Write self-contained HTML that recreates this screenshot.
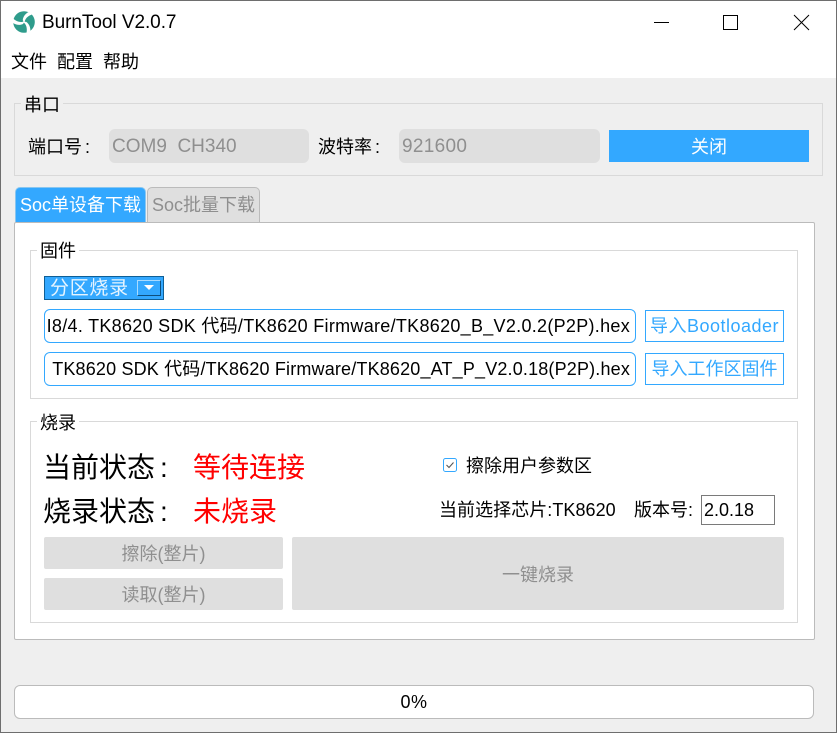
<!DOCTYPE html>
<html lang="zh"><head><meta charset="utf-8"><style>
*{box-sizing:border-box;margin:0;padding:0}
html,body{width:837px;height:733px;overflow:hidden;background:#efefef}
body{position:relative;font-family:"Liberation Sans","Noto Sans CJK SC",sans-serif;color:#000}
.a{position:absolute;white-space:nowrap}
.t{font-size:18px;line-height:24px}
.c{margin-left:3px}
.grp{position:absolute;border:1px solid #d9d9d9}
.lg{position:absolute;font-size:18px;line-height:20px;padding:0 3px}
.dis{position:absolute;background:#dfdfdf;color:#8f8f8f;font-size:18px;text-align:center;border-radius:2px}
.path{position:absolute;left:44px;width:592px;height:34px;background:#fff;border:1px solid #33a8ff;border-radius:6px;font-size:18px;line-height:32px;overflow:hidden;white-space:nowrap}
.imp{position:absolute;left:645px;width:139px;height:32px;border:1px solid #33a8ff;background:#fff;color:#33a8ff;font-size:18px;line-height:30px;text-align:center;white-space:nowrap}
</style></head><body>
<div class="a" style="left:0;top:0;width:837px;height:78px;background:#fff"></div>

<svg class="a" style="left:12px;top:10px" width="24" height="24" viewBox="0 0 24 24">
<circle cx="12" cy="12" r="10.8" fill="#2f9c8c"/>
<g fill="#fff">
<path id="b" d="M13 11 C9 13 5 12 1 8.5 L1 13 C4 15 8 15.5 11 14 Z"/>
<path d="M13 11 C9 13 5 12 1 8.5 L1 13 C4 15 8 15.5 11 14 Z" transform="rotate(120 12 12)"/>
<path d="M13 11 C9 13 5 12 1 8.5 L1 13 C4 15 8 15.5 11 14 Z" transform="rotate(240 12 12)"/>
</g>
</svg>
<div class="a" style="left:42px;top:10px;font-size:19px;line-height:26px;letter-spacing:-.05px">BurnTool V2.0.7</div>

<svg class="a" style="left:650px;top:10px" width="170" height="26" viewBox="0 0 170 26" fill="none" stroke="#000">
<path d="M4 12.5 H19" stroke-width="1"/>
<rect x="73.5" y="5.5" width="14" height="14" stroke-width="1"/>
<path d="M144 5 L159 20 M159 5 L144 20" stroke-width="1"/>
</svg>

<div class="a t" style="left:11px;top:50px">文件</div>
<div class="a t" style="left:57px;top:50px">配置</div>
<div class="a t" style="left:103px;top:50px">帮助</div>

<div class="grp" style="left:14px;top:103px;width:809px;height:73px"></div>
<div class="lg" style="left:21px;top:95px;background:#efefef">串口</div>
<div class="a t" style="left:28px;top:135px">端口号<span class="c">:</span></div>
<div class="a" style="left:109px;top:129px;width:200px;height:34px;background:#dfdfdf;border-radius:6px;color:#8f8f8f;font-size:19px;line-height:36px;padding-left:3px;white-space:pre">COM9  CH340</div>
<div class="a t" style="left:318px;top:135px">波特率<span class="c">:</span></div>
<div class="a" style="left:399px;top:129px;width:201px;height:34px;background:#dfdfdf;border-radius:6px;color:#8f8f8f;font-size:19px;line-height:36px;padding-left:3px;letter-spacing:.3px">921600</div>
<div class="a" style="left:609px;top:130px;width:200px;height:32px;background:#33a8ff;color:#fff;font-size:18px;line-height:34px;text-align:center">关闭</div>

<div class="a" style="left:15px;top:187px;width:131px;height:35px;background:#33a8ff;border:1px solid #88c6f0;border-bottom:0;border-radius:5px 5px 0 0;color:#fff;font-size:18px;line-height:34px;text-align:center">Soc单设备下载</div>
<div class="a" style="left:147px;top:187px;width:113px;height:35px;background:#dfdfdf;border:1px solid #bbb;border-bottom:0;border-radius:5px 5px 0 0;color:#8f8f8f;font-size:18px;line-height:34px;text-align:center">Soc批量下载</div>
<div class="a" style="left:14px;top:222px;width:801px;height:418px;background:#fff;border:1px solid #bbb;border-radius:2px"></div>

<div class="grp" style="left:30px;top:250px;width:768px;height:149px"></div>
<div class="lg" style="left:37px;top:241px;background:#fff">固件</div>
<div class="a" style="left:44px;top:276px;width:120px;height:24px;background:#33a8ff;border:1px solid #0f5f96;outline:1px solid #33a8ff;outline-offset:-2px;color:#e6f4ff;font-size:19px;line-height:24px;padding-left:5px;letter-spacing:.7px">分区烧录</div>
<div class="a" style="left:137px;top:280px;width:24px;height:16px;background:#33a8ff;border:1px solid #0f4f7d;border-top-color:#a9dbff;border-left-color:#a9dbff"></div>
<svg class="a" style="left:143px;top:285px" width="12" height="6"><path d="M1 0 H11 L6 5Z" fill="#fff"/></svg>

<div class="path" style="top:309px"><span style="position:absolute;right:5px;letter-spacing:.29px">I8/4. TK8620 SDK 代码/TK8620 Firmware/TK8620_B_V2.0.2(P2P).hex</span></div>
<div class="path" style="top:352px"><span style="position:absolute;right:5px;letter-spacing:.17px">TK8620 SDK 代码/TK8620 Firmware/TK8620_AT_P_V2.0.18(P2P).hex</span></div>
<div class="imp" style="top:310px;letter-spacing:.5px">导入Bootloader</div>
<div class="imp" style="top:353px">导入工作区固件</div>

<div class="grp" style="left:30px;top:421px;width:768px;height:202px"></div>
<div class="lg" style="left:37px;top:413px;background:#fff">烧录</div>
<div class="a" style="left:43px;top:450px;font-size:28px;line-height:36px">当前状态<span style="margin-left:5px">:</span></div>
<div class="a" style="left:193px;top:450px;font-size:28px;line-height:36px;color:#f00">等待连接</div>
<div class="a" style="left:43px;top:494px;font-size:28px;line-height:36px">烧录状态<span style="margin-left:5px">:</span></div>
<div class="a" style="left:193px;top:494px;font-size:28px;line-height:36px;color:#f00">未烧录</div>

<svg class="a" style="left:443px;top:458px" width="14" height="14" viewBox="0 0 14 14"><rect x=".5" y=".5" width="13" height="13" rx="2" fill="#fff" stroke="#33a8ff"/><path d="M3.5 7 L6 9.5 L10.5 4.5" fill="none" stroke="#555" stroke-width="1.1"/></svg>
<div class="a t" style="left:466px;top:454px">擦除用户参数区</div>
<div class="a t" style="left:439px;top:498px;letter-spacing:.05px">当前选择芯片:TK8620</div>
<div class="a t" style="left:634px;top:498px">版本号:</div>
<div class="a" style="left:701px;top:495px;width:74px;height:30px;border:1px solid #7a7a7a;background:#fff;font-size:18px;line-height:29px;padding-left:2px">2.0.18</div>

<div class="dis" style="left:44px;top:537px;width:239px;height:32px;line-height:34px">擦除(整片)</div>
<div class="dis" style="left:44px;top:578px;width:239px;height:32px;line-height:34px">读取(整片)</div>
<div class="dis" style="left:292px;top:537px;width:492px;height:73px;line-height:77px">一键烧录</div>

<div class="a" style="left:14px;top:685px;width:800px;height:34px;background:#fff;border:1px solid #bbb;border-radius:6px;font-size:18px;line-height:33px;text-align:center;letter-spacing:.5px">0%</div>

<div class="a" style="left:0;top:0;width:837px;height:733px;border:1px solid #6e6e6e;pointer-events:none"></div>
</body></html>
